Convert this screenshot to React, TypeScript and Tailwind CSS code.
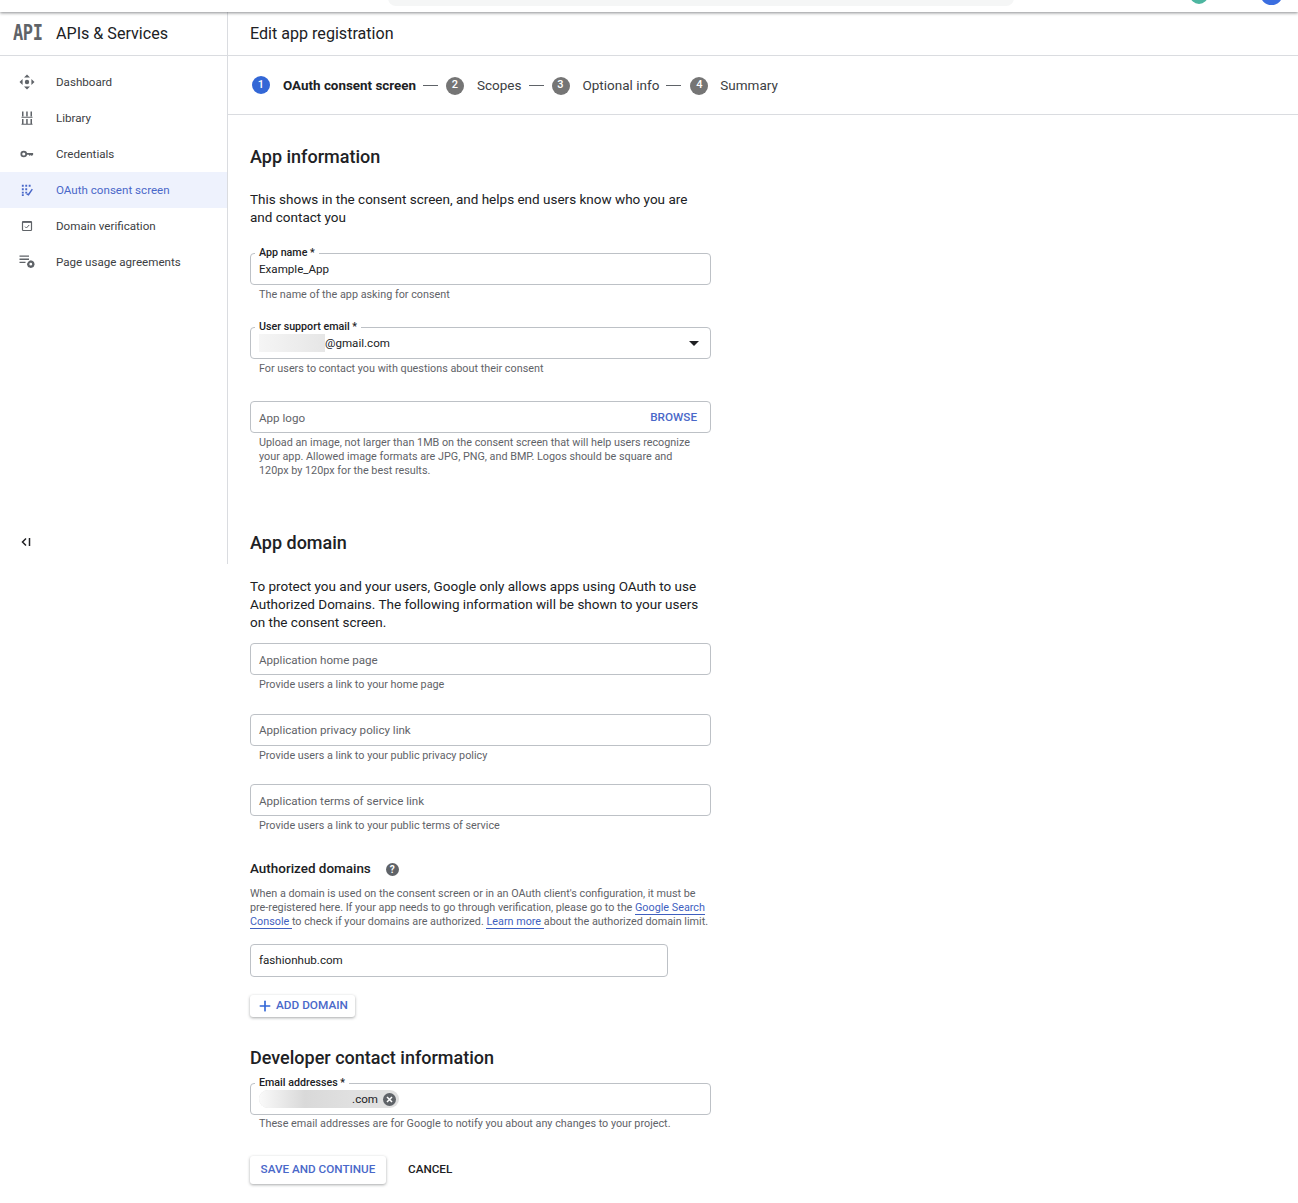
import { Plus } from 'lucide-react'
import type { ReactNode } from 'react'

const navItems = [
  { label: 'Dashboard', icon: <DashboardIcon /> },
  { label: 'Library', icon: <LibraryIcon /> },
  { label: 'Credentials', icon: <KeyIcon /> },
  { label: 'OAuth consent screen', icon: <ConsentIcon />, active: true },
  { label: 'Domain verification', icon: <VerifyIcon /> },
  { label: 'Page usage agreements', icon: <UsageIcon /> },
]

const steps = [
  { n: 1, label: 'OAuth consent screen', active: true },
  { n: 2, label: 'Scopes' },
  { n: 3, label: 'Optional info' },
  { n: 4, label: 'Summary' },
]

function DashboardIcon() {
  return (
    <svg width="16" height="16" viewBox="0 0 16 16" fill="#5f6368">
      <path d="M8 .5 11 3.600H5zM8 15.500 5 12.400h6zM.5 8l3.100-3v6zM15.500 8l-3.100 3V5z" />
      <circle cx="8" cy="8" r="2.200" />
    </svg>
  )
}

function LibraryIcon() {
  return (
    <svg width="12" height="14" viewBox="0 0 12 14" fill="#5f6368">
      <path d="M1 .5h1.500v5H1zM5.200 .5h1.500v5H5.200zM9.500 .5H11v5H9.500zM1 8h1.500v5H1zM5.200 8h1.500v5H5.200zM9.500 8H11v5H9.500z" />
      <path d="M.5 5.800h11v1H.5zM.5 12.800h11v1H.5z" />
    </svg>
  )
}

function KeyIcon() {
  return (
    <svg width="14" height="14" viewBox="0 0 16 16" fill="none">
      <circle cx="4.300" cy="8" r="2.800" stroke="#5f6368" strokeWidth="2" />
      <path d="M7 6.800h8v2l-1.500 1.500-1.200-1.200-1.200 1.200-1.100-1.500H7z" fill="#5f6368" />
    </svg>
  )
}

function ConsentIcon() {
  return (
    <svg width="12" height="12" viewBox="0 0 14 14" fill="#4a68c9">
      <path d="M1 1h2.200v2.200H1zM5 1h2.200v2.200H5zM9 1h2.200v2.200H9zM1 5h2.200v2.200H1zM5 5h2.200v2.200H5zM1 9h2.200v2.200H1zM5 9h2.200v2.200H5zM1 12h2.200v2H1z" />
      <path d="M6.500 11.500l2.200 1 4.500-6.500" fill="none" stroke="#4a68c9" strokeWidth="1.700" />
    </svg>
  )
}

function VerifyIcon() {
  return (
    <svg width="14" height="14" viewBox="0 0 14 14" fill="none" stroke="#5f6368">
      <rect x="2.500" y="2.500" width="9" height="9" rx="0.800" strokeWidth="1.200" />
      <path d="M2.500 3.200h9" strokeWidth="1.400" />
      <path d="M5 7.600l1.400 1.400L9.200 6" strokeWidth="1" />
    </svg>
  )
}

function UsageIcon() {
  return (
    <svg width="16" height="16" viewBox="0 0 16 16" fill="#5f6368">
      <path d="M.5 1.500h9.500v1.300H.5zM.5 4.600h9.500v1.300H.5zM.5 7.700h6v1.300h-6z" />
      <circle cx="11.800" cy="10.200" r="2.500" fill="none" stroke="#5f6368" strokeWidth="2.200" />
      <path d="M11.800 6.700v1M11.800 12.700v1M8.300 10.200h1M14.300 10.200h1" stroke="#5f6368" strokeWidth="1.500" />
    </svg>
  )
}

function Sidebar() {
  return (
    <aside className="w-[228px] h-[552px] shrink-0 border-r border-[#dadce0] flex flex-col">
      <div className="h-[44px] shrink-0 border-b border-[#dadce0] flex items-center pl-[13px]">
        <span className="w-[43px] font-['DejaVu_Sans_Mono',monospace] font-bold text-[17px] tracking-[-0.4px] text-[#5f6368]">
          <span className="inline-block scale-y-125">API</span>
        </span>
        <span className="pt-[2px] text-[16.100px] text-[#202124]">APIs &amp; Services</span>
      </div>
      <nav className="pt-2 flex-1">
        {navItems.map((item) => (
          <div
            key={item.label}
            className={`h-9 flex items-center text-[11.600px] ${item.active ? 'bg-[#eef2fd] text-[#4a68c9]' : 'text-[#3c4043]'}`}
          >
            <span className="w-[54px] flex justify-center">
              <span className="w-4 h-4 flex items-center justify-center">{item.icon}</span>
            </span>
            <span className="pl-[2px] pt-[2px]">{item.label}</span>
          </div>
        ))}
      </nav>
      <div className="h-[46px] pl-[20px] pt-[1px] flex items-center">
        <svg width="12" height="12" viewBox="0 0 12 12" fill="none" stroke="#202124" strokeWidth="1.500">
          <path d="M6 2.500 2.500 6 6 9.500" />
          <path d="M9.500 2v8" />
        </svg>
      </div>
    </aside>
  )
}

function Stepper() {
  return (
    <div className="h-[59px] border-b border-[#dadce0] flex items-center pl-[24px] pt-[1px] text-[13.500px]">
      {steps.map((step, i) => (
        <div key={step.n} className="flex items-center">
          {i > 0 && <span className={`w-[15px] h-px bg-[#5f6368] ml-[7px] ${i === 3 ? 'mr-[9px]' : 'mr-[8px]'}`} />}
          <span
            className={`w-[18px] h-[18px] rounded-full flex items-center justify-center text-[11px] text-white font-medium ${step.active ? 'bg-[#3367d6]' : 'bg-[#757575]'}`}
          >
            {step.n}
          </span>
          <span
            className={`${i === 3 ? 'ml-[12px]' : 'ml-[13px]'} ${step.active ? 'pt-[2px] font-bold text-[13.400px] text-[#202124]' : 'text-[#3c4043]'}`}
          >
            {step.label}
          </span>
        </div>
      ))}
    </div>
  )
}

function Field({ label, children, help, className }: { label?: string; children: ReactNode; help?: ReactNode; className?: string }) {
  return (
    <div className={className}>
      <div className="relative h-[32px] border border-[#bdc1c6] rounded-[4px] flex items-center px-2 pt-[2px] text-[11.600px] text-[#202124]">
        {label && (
          <span className="absolute left-[4px] -top-[8px] bg-white px-1 text-[10.700px] leading-[14px] font-medium text-[#202124]">
            {label}
          </span>
        )}
        {children}
      </div>
      {help && <div className="mt-[3px] pl-[9px] pr-[15px] text-[10.800px] leading-[14px] text-[#5f6368]">{help}</div>}
    </div>
  )
}

function Heading({ children, className }: { children: ReactNode; className?: string }) {
  return <h2 className={`text-[18px] leading-6 font-medium text-[#202124] ${className}`}>{children}</h2>
}

function Link({ children }: { children: ReactNode }) {
  return <span className="text-[#3f5fbf] border-b border-[#3f5fbf]">{children}</span>
}

export default function App() {
  return (
    <div className="w-[1298px] h-[1203px] bg-white overflow-hidden font-['Roboto',sans-serif]">
      <header className="relative h-3 bg-white shadow-[0_1px_3px_rgba(60,64,67,0.6)] z-10 overflow-hidden">
        <div className="absolute left-[388px] -top-3 w-[626px] h-[18px] rounded-lg bg-[#f5f6f6]" />
        <div className="absolute left-[1190px] -top-[14px] w-[18px] h-[18px] rounded-full bg-[#4db6a0]" />
        <div className="absolute left-[1260px] -top-[18px] w-[23px] h-[23px] rounded-full bg-[#3b6ee0]" />
      </header>
      <div className="flex">
        <Sidebar />
        <main className="flex-1 min-w-0">
          <div className="h-[44px] border-b border-[#dadce0] flex items-center pl-[22px] pt-[2px] text-[16.100px] text-[#202124]">
            Edit app registration
          </div>
          <Stepper />
          <div className="w-[483px] pl-[22px]">
            <Heading className="mt-[30px]">App information</Heading>
            <p className="mt-[21px] w-[450px] text-[13.500px] leading-[18px] text-[#202124]">
              This shows in the consent screen, and helps end users know who you are and contact you
            </p>
            <Field label="App name *" className="mt-[27px]" help="The name of the app asking for consent">
              Example_App
            </Field>
            <Field
              label="User support email *"
              className="mt-[25px]"
              help="For users to contact you with questions about their consent"
            >
              <span className="-mt-[2px] w-[66px] h-[18px] shrink-0 bg-gradient-to-r from-[#f5f5f5] to-[#e6e6e6]" />
              <span>@gmail.com</span>
              <span className="ml-auto -mt-[2px] mr-[3px] w-0 h-0 border-x-[5px] border-x-transparent border-t-[5px] border-t-[#202124]" />
            </Field>
            <Field
              className="mt-[25px]"
              help="Upload an image, not larger than 1MB on the consent screen that will help users recognize your app. Allowed image formats are JPG, PNG, and BMP. Logos should be square and 120px by 120px for the best results."
            >
              <span className="pt-[2px] text-[#5f6368]">App logo</span>
              <span className="ml-auto mr-[5px] -mt-[1px] text-[11.700px] font-medium text-[#4a68c9]">BROWSE</span>
            </Field>
            <Heading className="mt-[53px]">App domain</Heading>
            <p className="mt-[22px] w-[450px] text-[13.500px] leading-[18px] text-[#202124]">
              To protect you and your users, Google only allows apps using OAuth to use Authorized Domains. The following
              information will be shown to your users on the consent screen.
            </p>
            <Field className="mt-[12px]" help="Provide users a link to your home page">
              <span className="pt-[2px] text-[#5f6368]">Application home page</span>
            </Field>
            <Field className="mt-[22px]" help="Provide users a link to your public privacy policy">
              <span className="text-[#5f6368]">Application privacy policy link</span>
            </Field>
            <Field className="mt-[21px]" help="Provide users a link to your public terms of service">
              <span className="pt-[2px] text-[#5f6368]">Application terms of service link</span>
            </Field>
            <div className="mt-[26px] h-5 flex items-center text-[13.450px] font-medium text-[#202124]">
              Authorized domains
              <span className="ml-[15px] w-[13px] h-[13px] rounded-full bg-[#5f6368] text-white text-[10px] font-bold flex items-center justify-center">
                ?
              </span>
            </div>
            <p className="mt-[8px] text-[10.800px] leading-[14px] text-[#5f6368]">
              When a domain is used on the consent screen or in an OAuth client's configuration, it must be pre-registered
              here. If your app needs to go through verification, please go to the <Link>Google Search </Link>
              <Link>Console </Link>to check if your domains are authorized. <Link>Learn more </Link>about the authorized
              domain limit.
            </p>
            <div className="mt-[15px] w-[418px] h-[33px] border border-[#bdc1c6] rounded-[4px] flex items-center px-2 text-[11.600px] text-[#202124]">
              fashionhub.com
            </div>
            <button className="mt-[18px] h-[22px] w-[105px] rounded-[3px] bg-white shadow-[0_1px_3px_rgba(60,64,67,0.45)] flex items-center pl-[7px] text-[11.800px] font-medium text-[#4a68c9]">
              <Plus size={16} strokeWidth={2.5} className="mr-[3px] text-[#3367d6]" />
              ADD DOMAIN
            </button>
            <Heading className="mt-[29px]">Developer contact information</Heading>
            <Field
              label="Email addresses *"
              className="mt-[13px]"
              help={<div className="-mt-[1px]">These email addresses are for Google to notify you about any changes to your project.</div>}
            >
              <span className="relative -mt-[2px] w-[140px] h-[18px] rounded-full bg-[#e0e0e0] flex items-center justify-end pr-[3px] overflow-hidden">
                <span className="absolute left-0 top-0 w-[92px] h-full bg-gradient-to-r from-[#fafafa] via-[#d9d9d9] to-[#e0e0e0]" />
                <span className="relative pt-[2px]">.com</span>
                <span className="relative ml-[5px] w-[13px] h-[13px] rounded-full bg-[#5f6368] text-white flex items-center justify-center">
                  <svg width="7" height="7" viewBox="0 0 7 7" stroke="white" strokeWidth="1.500">
                    <path d="M1 1l5 5M6 1 1 6" />
                  </svg>
                </span>
              </span>
            </Field>
            <div className="mt-[25px] flex items-center gap-[22px] text-[11.700px] font-medium">
              <button className="h-[28px] w-[136px] rounded-[3px] bg-white shadow-[0_1px_3px_rgba(60,64,67,0.45)] text-[#4a68c9]">
                SAVE AND CONTINUE
              </button>
              <span className="text-[#202124]">CANCEL</span>
            </div>
          </div>
        </main>
      </div>
    </div>
  )
}
